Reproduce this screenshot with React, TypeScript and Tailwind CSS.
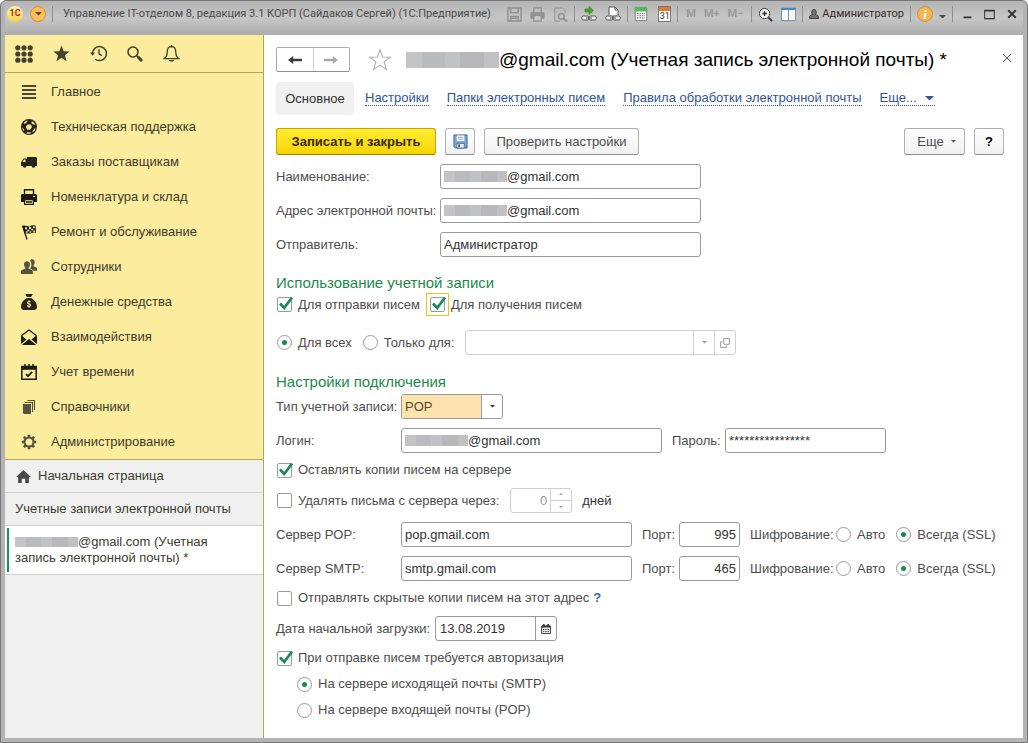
import React from "react";
import { FaSackDollar } from "react-icons/fa6";

interface IconProps {
  children: React.ReactNode;
  className?: string;
}

const Icon: React.FC<IconProps> = ({ children, className = "size-4" }) => (
  <svg
    viewBox="0 0 16 16"
    fill="none"
    stroke="currentColor"
    aria-hidden="true"
    className={`shrink-0 ${className}`}
  >
    {children}
  </svg>
);

const menu = [
  {
    title: "Главное",
    icon: (
      <Icon className="size-4 text-[#4a4638]">
        <path d="M1 2h14M1 6h14M1 10h14M1 14h14" strokeWidth="2" />
      </Icon>
    ),
  },
  {
    title: "Техническая поддержка",
    icon: (
      <Icon className="size-4 text-[#26251c]">
        <circle cx="8" cy="8" r="8" fill="currentColor" stroke="none" />
        <g fill="#fbec9e" stroke="none">
          <path d="M6.4 5.4h3.4l1.3 2.7-1.9 2.7H6.3L4.8 8z" />
          <path d="M3 3.6l2.6-2 1.2.5-3 3.2zM10.8 2l3 2.6-.2 1.6-3.2-2zM1.4 8.2l1.8 2.6-.2 1.6L1.6 10zM14.6 8.5l-.5 2.7-2.6 2.4.3-2.2zM6 13.2l3.6.1.4 1-2 .5-2.6-.4z" />
        </g>
      </Icon>
    ),
  },
  {
    title: "Заказы поставщикам",
    icon: (
      <Icon className="size-4 text-[#26251c]">
        <path d="M6 3h9l1 1v8H0V8.500L2.500 4.500H6z" fill="currentColor" stroke="none" />
        <path d="M3 5.500h1.500V8H1.500z" fill="#fbec9e" stroke="none" />
        <circle cx="3.700" cy="12" r="1.800" fill="currentColor" stroke="none" />
        <circle cx="12.500" cy="12" r="1.800" fill="currentColor" stroke="none" />
      </Icon>
    ),
  },
  {
    title: "Номенклатура и склад",
    icon: (
      <Icon className="size-4 text-[#1b1b14]">
        <path d="M3.500 6V.7h9V6" strokeWidth="1.400" />
        <path d="M1 5h14l1 1v7h-3v-3H3v3H0V6z" fill="currentColor" stroke="none" />
        <path d="M3.600 10.500h8.800v4.800H3.600zM5 13h6" strokeWidth="1.300" />
        <path d="M12 7.500h2" stroke="#fbec9e" />
      </Icon>
    ),
  },
  {
    title: "Ремонт и обслуживание",
    icon: (
      <Icon className="size-4 text-[#1b1b14]">
        <path d="M1.500 1.500L6 15.500" strokeWidth="1.300" />
        <path
          d="M1.500 2.200c3-2 5 1 7.300 0 2-1 3.500-1.200 5.800-.8l.4 7.400c-2-.7-3.500-.4-5.500.6-2 .8-3.500-1-5.800.2z"
          fill="currentColor"
          stroke="none"
        />
        <path
          d="M4 3.300h2v2H4zM8 3h2v2H8zM12 2.300h1.800v2H12zM6.300 5.500h2v1.800h-2zM10.200 4.800h1.800v1.800h-1.800zM4.800 7.300h1.700v1.400H4.800zM8.500 7.300h1.700v1.500H8.500zM12.200 6.500h1.700v1.500h-1.700z"
          fill="#fbec9e"
          stroke="none"
        />
      </Icon>
    ),
  },
  {
    title: "Сотрудники",
    icon: (
      <Icon className="size-4 text-[#56523f]">
        <g fill="currentColor" stroke="none">
          <path d="M9 1.500c.5-.9 1.200-1.200 2-1.200 1.700 0 2.700 1.200 2.700 3 0 1.300-.5 2.300-1.200 2.900v1l2.800 1.300c.5.300.7.700.7 1.300v2h-3.800c-.3-1-1-1.500-3.200-2.400 1-1 1.500-2.200 1.400-4C10.300 3.500 9.900 2.300 9 1.500z" />
          <path d="M6 2.200c1.800 0 2.900 1.300 2.900 3.100 0 1.500-.6 2.600-1.300 3.200v1.100l3.200 1.300c.8.300 1 .8 1 1.500V15H0v-2.600c0-.7.300-1.200 1-1.500l3.300-1.300V8.500C3.600 7.900 3 6.800 3 5.300c0-1.800 1.200-3.100 3-3.100z" />
        </g>
      </Icon>
    ),
  },
  {
    title: "Денежные средства",
    icon: <FaSackDollar className="size-4 shrink-0 text-[#26251c]" aria-hidden="true" />,
  },
  {
    title: "Взаимодействия",
    icon: (
      <Icon className="size-4 text-[#1b1b14]">
        <path d="M.7 6.500L8 .9l7.300 5.600" strokeWidth="1.200" />
        <path d="M0 6l5.500 4.500L0 15zM16 6l-5.500 4.500L16 15zM.8 16L8 10l7.200 6z" fill="currentColor" stroke="none" />
      </Icon>
    ),
  },
  {
    title: "Учет времени",
    icon: (
      <Icon className="size-4 text-[#1b1b14]">
        <path d="M.8 2.500h14.400v12.700H.8z" strokeWidth="1.500" />
        <path d="M1 4.300h14" strokeWidth="3" />
        <path d="M4 0v3M8 0v3M12 0v3" strokeWidth="1.500" />
        <path d="M5 10l2 2.200 4.200-4.400" strokeWidth="1.800" />
      </Icon>
    ),
  },
  {
    title: "Справочники",
    icon: (
      <Icon className="size-4 text-[#56523f]">
        <path d="M2 5h8v10H3l-1-1z" fill="currentColor" stroke="none" />
        <path d="M4 3.500h7.500V13M6.500 1.500h7V11" strokeWidth="1.100" />
      </Icon>
    ),
  },
  {
    title: "Администрирование",
    icon: (
      <Icon className="size-4 text-[#56523f]">
        <circle cx="8" cy="8" r="4.500" strokeWidth="2" />
        <path
          d="M8 .8V3M8 13v2.200M.8 8H3M13 8h2.200M2.900 2.900l1.600 1.600M11.500 11.500l1.600 1.600M13.100 2.900l-1.600 1.600M4.500 11.500l-1.600 1.600"
          strokeWidth="2.600"
        />
      </Icon>
    ),
  },
];

const tabs = ["Настройки", "Папки электронных писем", "Правила обработки электронной почты"];

const Arrow: React.FC<{ className?: string }> = ({ className = "w-[5px]" }) => (
  <svg viewBox="0 0 6 3" fill="currentColor" aria-hidden="true" className={`shrink-0 ${className}`}>
    <path d="M0 0h6L3 3z" />
  </svg>
);

const Divider: React.FC = () => <span className="h-4 w-px bg-[#8f8f8f]" />;

// Pixelated strip that hides the private part of an address
const Mosaic: React.FC<{ className: string }> = ({ className }) => (
  <span className={`flex shrink-0 ${className}`} aria-hidden="true">
    <span className="flex-2 bg-[#c4c4c6]" />
    <span className="flex-3 bg-[#babbbe]" />
    <span className="flex-2 bg-[#c1c2c6]" />
    <span className="flex-3 bg-[#b8b8bb]" />
    <span className="flex-2 bg-[#c1c1c3]" />
  </span>
);

interface FieldProps {
  id: string;
  value: string;
  className: string;
  hidden?: boolean;
  type?: string;
  align?: string;
}

const Field: React.FC<FieldProps> = ({ id, value, className, hidden, type = "text", align = "" }) => (
  <div
    className={`flex h-[25px] items-center rounded-[3px] border border-[#9a9a9a] bg-white px-[3px] text-[#333] ${className}`}
  >
    {hidden && <Mosaic className="h-[11px] w-[63px]" />}
    <input
      id={id}
      type={type}
      defaultValue={value}
      className={`w-full min-w-0 bg-transparent outline-none ${align}`}
    />
  </div>
);

const Check: React.FC<{ label: string; checked?: boolean; focused?: boolean }> = ({
  label,
  checked,
  focused,
}) => (
  <label className="flex items-center gap-0.5">
    <span
      className={
        focused
          ? "grid size-[23px] place-items-center border border-[#e0c818]"
          : "grid size-[23px] place-items-center"
      }
    >
      <input
        type="checkbox"
        defaultChecked={checked}
        className="peer col-start-1 row-start-1 size-[15px] appearance-none rounded-[2px] border border-[#9a9a9a] bg-white"
      />
      <svg
        viewBox="0 0 17 17"
        aria-hidden="true"
        className="pointer-events-none invisible col-start-1 row-start-1 size-[17px] overflow-visible peer-checked:visible"
      >
        <path d="M4 7.500l4.200 4.500L16 1.500" fill="none" stroke="#168a52" strokeWidth="2.700" />
      </svg>
    </span>
    {label}
  </label>
);

const Radio: React.FC<{ label: string; name: string; checked?: boolean }> = ({
  label,
  name,
  checked,
}) => (
  <label className="flex items-center gap-[6px]">
    <span className="grid place-items-center">
      <input
        type="radio"
        name={name}
        defaultChecked={checked}
        className="peer col-start-1 row-start-1 size-[15px] appearance-none rounded-full border border-[#9a9a9a] bg-white"
      />
      <span className="pointer-events-none invisible col-start-1 row-start-1 size-[5px] rounded-full bg-[#168a52] peer-checked:visible" />
    </span>
    {label}
  </label>
);

const ServerRow: React.FC<{ id: string; title: string; host: string; port: string }> = ({
  id,
  title,
  host,
  port,
}) => (
  <div className="mt-[9px] flex items-center">
    <label htmlFor={id} className="w-[125px] shrink-0">
      {title}
    </label>
    <Field id={id} value={host} className="w-[231px]" />
    <label htmlFor={`${id}-port`} className="ml-[10px] w-[37px]">
      Порт:
    </label>
    <Field id={`${id}-port`} value={port} className="w-[61px]" align="text-right" />
    <span className="ml-[10px] w-[86px]">Шифрование:</span>
    <Radio name={`${id}-ssl`} label="Авто" />
    <span className="w-[11px]" />
    <Radio name={`${id}-ssl`} label="Всегда (SSL)" checked />
  </div>
);

const TitleBar: React.FC = () => (
  <header className="flex h-[34px] items-center bg-linear-to-b from-[#b4b4b4] via-[#c6c6c6] to-[#adadad] pr-[6px] pb-2 pl-[2px] font-[Roboto,sans-serif] text-[11px] text-[#4a4a4a]">
    <span className="flex size-4 items-center justify-center rounded-full bg-linear-to-b from-[#fff6b0] to-[#f8d040] text-[9px] font-bold text-[#c8201a]">
      1С
    </span>
    <button
      aria-label="Главное меню"
      className="ml-[7px] flex size-4 items-center justify-center rounded-full border border-[#d59438] bg-[#f9bd5e] text-[#6b4420]"
    >
      <Arrow className="w-[7px]" />
    </button>
    <span className="ml-[6px] h-4 w-px bg-[#8f8f8f]" />
    <h1 className="ml-[10px] whitespace-nowrap">
      Управление IT-отделом 8, редакция 3.1 КОРП (Сайдаков Сергей) (1С:Предприятие)
    </h1>

    <div className="ml-auto flex shrink-0 items-center gap-[6px]">
      <div className="flex items-center gap-2 text-[#909090]">
        <button aria-label="Сохранить">
          <Icon className="size-[15px]">
            <path d="M1 1h14v14H1zM4 1v5h8V1M4 15v-5h8v5M5 12h6" strokeWidth="1.500" />
          </Icon>
        </button>
        <button aria-label="Печать">
          <Icon className="size-[15px]">
            <path d="M4 6V1h8v5M4 9h8v6H4z" strokeWidth="1.300" />
            <path d="M1 6h14v6h-3V9H4v3H1z" fill="currentColor" />
          </Icon>
        </button>
        <button aria-label="Просмотр">
          <Icon className="size-[15px]">
            <path d="M7 15H2V1h8l3 3v3" />
            <circle cx="9" cy="10" r="3" strokeWidth="1.500" />
            <path d="M11.200 12.200L15 15.500" strokeWidth="2" />
          </Icon>
        </button>
      </div>
      <Divider />
      <div className="flex items-center gap-2">
        <button aria-label="Получить ссылку">
          <Icon>
            <rect x=".8" y="10" width="7" height="4" rx="1.500" stroke="#555" fill="#eee" />
            <rect x="8.200" y="10" width="7" height="4" rx="1.500" stroke="#555" fill="#eee" />
            <path d="M5 12h6" stroke="#555" />
            <path d="M4 3h4V.5L12.500 4.500 8 8.500V6H4z" fill="#43a52d" stroke="#2d7a1d" strokeWidth=".6" />
          </Icon>
        </button>
        <button aria-label="Перейти по ссылке">
          <Icon>
            <path d="M4 9V1h6l3 3v5" stroke="#555" fill="#fff" />
            <path d="M10 1v3h3" stroke="#555" />
            <rect x=".8" y="10" width="7" height="4" rx="1.500" stroke="#555" fill="#eee" />
            <rect x="8.200" y="10" width="7" height="4" rx="1.500" stroke="#555" fill="#eee" />
            <path d="M5 12h6" stroke="#555" />
          </Icon>
        </button>
      </div>
      <Divider />
      <div className="flex items-center gap-[10px]">
        <button aria-label="Калькулятор">
          <Icon className="h-4 w-[14px]">
            <path d="M1.500 .5h13v15h-13z" fill="#fff" stroke="#777" />
            <path d="M1 0h14v5H1z" fill="#4fb66a" stroke="none" />
            <path
              d="M3.500 7.500h9M3.500 10h9M3.500 12.500h9"
              stroke="#6b6b6b"
              strokeWidth="1.400"
              strokeDasharray="1.600 1.200"
            />
          </Icon>
        </button>
        <button
          aria-label="Календарь"
          className="flex h-4 w-[13px] flex-col items-center border border-[#777] bg-white text-[9px] leading-[10px] text-[#333]"
        >
          <span className="h-1 w-full shrink-0 bg-[#dd7a35]" />
          31
        </button>
      </div>
      <Divider />
      <div className="flex gap-2 px-0.5 font-bold text-[#9a9a9a]">
        <button>M</button>
        <button>M+</button>
        <button>M−</button>
      </div>
      <Divider />
      <div className="flex items-center gap-2">
        <button aria-label="Масштаб" className="text-[#333]">
          <Icon className="size-[15px]">
            <circle cx="7" cy="7" r="5.500" fill="#eee" />
            <path d="M4.500 7h5M7 4.500v5" strokeWidth="1.500" />
            <path d="M11 11l4 4" strokeWidth="2" />
          </Icon>
        </button>
        <button aria-label="Панели">
          <Icon className="size-[15px]">
            <path d="M.5 1.500h15v13H.5z" fill="#fff" stroke="#6c88a8" />
            <path d="M0 2h16" stroke="#3d8cd0" strokeWidth="2.500" />
            <path d="M8 3v12" stroke="#6c88a8" />
          </Icon>
        </button>
      </div>
      <Divider />
      <button className="flex items-center gap-[3px] text-[#3a2c2c]">
        <Icon className="size-[10px]">
          <path
            d="M8 1c3 0 3.500 2 3.500 4S10.500 8.500 10 9c3 0 5.500 1.500 5.500 6H.5C.500 10.500 3 9 6 9 5.500 8.500 4.500 7 4.500 5S5 1 8 1z"
            fill="#777"
            stroke="#333"
            strokeWidth="1.500"
          />
        </Icon>
        Администратор
      </button>
      <Divider />
      <button
        aria-label="Справка"
        className="flex size-4 items-center justify-center rounded-full border border-[#d59438] bg-[#f5b550] font-['Liberation_Serif',serif] text-[13px] leading-none font-bold text-white italic"
      >
        i
      </button>
      <button aria-label="Меню справки" className="self-end pb-1 text-[#444]">
        <Arrow className="w-[7px]" />
      </button>
      <Divider />
      <div className="flex items-center gap-3 pl-1 text-[#333]">
        <button aria-label="Свернуть">
          <Icon className="size-[9px]">
            <path d="M1 13h14" strokeWidth="3" />
          </Icon>
        </button>
        <button aria-label="Развернуть">
          <Icon className="size-[11px]">
            <path d="M1 2h14v12H1z" strokeWidth="1.500" />
            <path d="M1 2.500h14" strokeWidth="2" />
          </Icon>
        </button>
        <button aria-label="Закрыть окно">
          <Icon className="size-[10px]">
            <path d="M2 2l12 12M14 2L2 14" strokeWidth="3" />
          </Icon>
        </button>
      </div>
    </div>
  </header>
);

const Sidebar: React.FC = () => (
  <aside className="flex w-[259px] shrink-0 flex-col border-r border-[#b5a655] bg-[#f0f0f0] text-[#3f3b2d]">
    <div className="bg-[#fbec9e]">
      <div className="flex h-[38px] items-center gap-5 border-b border-[#b5a655] pl-[10px] text-[#45412f]">
        <button aria-label="Меню функций">
          <Icon className="size-[18px]">
            <g fill="currentColor" stroke="none">
              {[2.5, 8, 13.5].map((y) =>
                [2.5, 8, 13.5].map((x) => <circle key={`${x}-${y}`} cx={x} cy={y} r="2.300" />)
              )}
            </g>
          </Icon>
        </button>
        <button aria-label="Избранное">
          <Icon className="size-[17px]">
            <path
              d="M8 .5l2 5.400 5.700.2-4.500 3.500 1.600 5.600L8 12l-4.800 3.200 1.600-5.600L.3 6.100 6 5.900z"
              fill="currentColor"
              stroke="none"
            />
          </Icon>
        </button>
        <button aria-label="История">
          <Icon className="size-[17px]">
            <path d="M2.300 8A6.600 6.600 0 1 1 5 13.400" strokeWidth="1.400" />
            <path d="M0 7h4.800L2.300 10z" fill="currentColor" stroke="none" />
            <path d="M8.500 4v4.300l2.700 1.700" strokeWidth="1.300" />
          </Icon>
        </button>
        <button aria-label="Поиск">
          <Icon>
            <circle cx="6" cy="6" r="5" strokeWidth="1.600" />
            <path d="M9.500 9.500l2 2" strokeWidth="1.400" />
            <path d="M10.800 10.800l4.200 4.200" strokeWidth="3" />
          </Icon>
        </button>
        <button aria-label="Оповещения">
          <Icon className="size-[17px]">
            <path
              d="M8 1.500c-3 0-4 2-4 5 0 3.500-1 5-2.700 6.300h13.400C13 11.500 12 10 12 6.500c0-3-1-5-4-5z"
              strokeWidth="1.200"
            />
            <path d="M8 0v2" strokeWidth="1.600" />
            <path d="M5.500 14h5c-.5 2-4.500 2-5 0z" fill="currentColor" stroke="none" />
          </Icon>
        </button>
      </div>
      <nav className="border-b border-[#b5a655] pt-px">
        {menu.map((item) => (
          <a key={item.title} href="#" className="flex h-[35px] items-center gap-[14px] pl-4">
            {item.icon}
            {item.title}
          </a>
        ))}
      </nav>
    </div>
    <a href="#" className="flex h-[33px] items-center gap-[7px] border-b border-[#d0d0d0] pl-[11px]">
      <Icon className="size-[15px] text-[#4a4a4a]">
        <path d="M8 1l8 7.500h-2.300V15H9.800v-4.500H6.200V15H2.300V8.500H0z" fill="currentColor" stroke="none" />
      </Icon>
      Начальная страница
    </a>
    <a href="#" className="flex h-[33px] items-center border-b border-[#d0d0d0] pl-[10px]">
      Учетные записи электронной почты
    </a>
    <a href="#" className="flex h-[49px] border-b border-[#d0d0d0] bg-white py-[2px] pl-0.5">
      <span className="w-0.5 shrink-0 bg-[#14935b]" />
      <span className="ml-[6px] flex flex-col justify-center leading-4">
        <span className="flex items-center">
          <Mosaic className="h-[10px] w-[63px]" />
          @gmail.com (Учетная
        </span>
        запись электронной почты) *
      </span>
    </a>
  </aside>
);

const buttonStyle =
  "flex h-[27px] items-center justify-center rounded-[3px] border border-[#b0b0b0] border-b-[#8c8c8c] bg-linear-to-b from-white to-[#f1f1f1]";

const AccountForm: React.FC = () => (
  <main className="min-w-0 flex-1 bg-white pr-[19px] pb-[19px] pl-3 text-[#4d4d4d]">
    <div className="flex items-center pt-3">
      <div className="flex h-[25px] w-[74px] rounded-[2px] border border-[#ababab] border-b-[#8c8c8c]">
        <button aria-label="Назад" className="flex flex-1 items-center justify-center text-[#3c3c3c]">
          <Icon className="size-[14px]">
            <path d="M4 8h12" strokeWidth="3" />
            <path d="M0 8l6-4.500v9z" fill="currentColor" stroke="none" />
          </Icon>
        </button>
        <button
          aria-label="Вперед"
          className="flex flex-1 items-center justify-center border-l border-[#d0d0d0] text-[#a8a8a8]"
        >
          <Icon className="size-[14px]">
            <path d="M0 8h12" strokeWidth="3" />
            <path d="M16 8l-6-4.500v9z" fill="currentColor" stroke="none" />
          </Icon>
        </button>
      </div>
      <button aria-label="В избранное" className="ml-[18px] text-[#ababab]">
        <Icon className="size-6">
          <path
            d="M8 1.100l1.700 4.900 5.200.1-4.100 3.200 1.500 5L8 11.400l-4.300 2.900 1.500-5L1.100 6.100 6.300 6z"
            strokeWidth=".7"
          />
        </Icon>
      </button>
      <h2 className="ml-[14px] flex items-center text-[19px] leading-6 text-black">
        <Mosaic className="h-4 w-[93px]" />
        @gmail.com (Учетная запись электронной почты) *
      </h2>
      <button aria-label="Закрыть" className="-mr-2 mb-1 ml-auto text-[#555]">
        <Icon className="size-[10px]">
          <path d="M1.500 1.500l13 13M14.500 1.500l-13 13" strokeWidth="1.600" />
        </Icon>
      </button>
    </div>

    <nav className="mt-[10px] flex h-[33px] items-center gap-[18px] whitespace-nowrap text-[#2f5597]">
      <a
        href="#"
        className="-mr-[7px] flex h-[33px] w-[78px] items-center justify-center rounded-[4px] bg-[#f0f0f0] text-[#333]"
      >
        Основное
      </a>
      {tabs.map((tab) => (
        <a key={tab} href="#" className="border-b border-dotted border-[#2f5597] leading-[14px]">
          {tab}
        </a>
      ))}
      <a
        href="#"
        className="flex items-center gap-2 border-b border-dotted border-[#2f5597] pr-px leading-[14px]"
      >
        Еще...
        <Arrow className="w-[9px]" />
      </a>
    </nav>

    <div className="mt-[13px] flex gap-[9px]">
      <button className="flex h-[27px] w-40 items-center justify-center rounded-[3px] border border-[#c5a500] border-b-[#988000] bg-linear-to-b from-[#ffec2e] to-[#f8d500] font-bold text-[#3a2a00]">
        Записать и закрыть
      </button>
      <button aria-label="Записать" className={`${buttonStyle} w-[30px]`}>
        <Icon className="size-[15px]">
          <path d="M1 1h14v14H2.500L1 13.500z" fill="#7ea6d3" stroke="#42658f" />
          <path d="M4 1.500h8v6H4z" fill="#fff" stroke="none" />
          <path d="M5 3.500h6M5 5.500h6" stroke="#8ba3bd" />
          <path d="M4 10h8v5H4z" fill="#e8eef5" stroke="#42658f" strokeWidth=".8" />
          <path d="M5.500 11h2v3h-2z" fill="#42658f" stroke="none" />
        </Icon>
      </button>
      <button className={`${buttonStyle} w-[155px]`}>Проверить настройки</button>
      <button className={`${buttonStyle} ml-auto w-[61px] gap-[7px] pl-1`}>
        Еще
        <Arrow />
      </button>
      <button className={`${buttonStyle} w-[30px] font-bold text-black`}>?</button>
    </div>

    <form>
      <div className="mt-[9px] flex items-center">
        <label htmlFor="name" className="w-[164px] shrink-0">
          Наименование:
        </label>
        <Field id="name" value="@gmail.com" hidden className="w-[261px]" />
      </div>
      <div className="mt-[9px] flex items-center">
        <label htmlFor="address" className="w-[164px] shrink-0 whitespace-nowrap">
          Адрес электронной почты:
        </label>
        <Field id="address" value="@gmail.com" hidden className="w-[261px]" />
      </div>
      <div className="mt-[9px] flex items-center">
        <label htmlFor="sender" className="w-[164px] shrink-0">
          Отправитель:
        </label>
        <Field id="sender" value="Администратор" className="w-[261px]" />
      </div>

      <h3 className="mt-4 text-[15px] leading-5 text-[#1c8a4c]">Использование учетной записи</h3>
      <div className="-ml-[3px] flex h-[23px] items-center gap-[6px]">
        <Check label="Для отправки писем" checked />
        <Check label="Для получения писем" checked focused />
      </div>
      <div className="mt-[14px] flex items-center gap-[11px] pl-px">
        <Radio name="owner" label="Для всех" checked />
        <Radio name="owner" label="Только для:" />
        <div className="flex h-[25px] w-[271px] rounded-[3px] border border-[#cfcfcf] text-[#999]">
          <input aria-label="Пользователь" disabled className="min-w-0 flex-1" />
          <button
            type="button"
            aria-label="Выбрать"
            className="flex w-[21px] items-center justify-center border-l border-[#cfcfcf]"
          >
            <Arrow />
          </button>
          <button
            type="button"
            aria-label="Открыть"
            className="flex w-[21px] items-center justify-center border-l border-[#cfcfcf]"
          >
            <Icon className="size-[10px]">
              <path d="M6 1h9v9H6zM4 6H1v9h9v-3" strokeWidth="1.600" />
            </Icon>
          </button>
        </div>
      </div>

      <h3 className="mt-[17px] text-[15px] leading-5 text-[#1c8a4c]">Настройки подключения</h3>
      <div className="mt-0.5 flex items-center">
        <label htmlFor="kind" className="w-[125px] shrink-0 whitespace-nowrap">
          Тип учетной записи:
        </label>
        <div className="flex h-[25px] w-[102px] overflow-hidden rounded-[3px] border border-[#9a9a9a] text-[#333]">
          <select
            id="kind"
            defaultValue="POP"
            className="min-w-0 flex-1 appearance-none bg-[#fde4ae] pl-[3px] text-[#5a4a2a] outline-none"
          >
            <option>POP</option>
            <option>IMAP</option>
          </select>
          <span className="flex w-[21px] items-center justify-center border-l border-[#9a9a9a]">
            <Arrow />
          </span>
        </div>
      </div>
      <div className="mt-[9px] flex items-center">
        <label htmlFor="login" className="w-[125px] shrink-0">
          Логин:
        </label>
        <Field id="login" value="@gmail.com" hidden className="w-[261px]" />
        <label htmlFor="password" className="ml-[10px] w-[53px]">
          Пароль:
        </label>
        <Field id="password" value="****************" className="w-[161px]" />
      </div>
      <div className="mt-2 -ml-[3px] flex h-[18px] items-center">
        <Check label="Оставлять копии писем на сервере" checked />
      </div>
      <div className="mt-[9px] -ml-[3px] flex items-center">
        <Check label="Удалять письма с сервера через:" />
        <div className="ml-[11px] flex h-[25px] w-[62px] rounded-[3px] border border-[#cfcfcf] text-[#999]">
          <input
            aria-label="Количество дней"
            defaultValue="0"
            disabled
            className="min-w-0 flex-1 pr-[3px] text-right"
          />
          <span className="flex w-[21px] flex-col border-l border-[#cfcfcf]">
            <button
              type="button"
              aria-label="Больше"
              className="flex flex-1 rotate-180 items-center justify-center"
            >
              <Arrow className="w-1" />
            </button>
            <button
              type="button"
              aria-label="Меньше"
              className="flex flex-1 items-center justify-center border-t border-[#cfcfcf]"
            >
              <Arrow className="w-1" />
            </button>
          </span>
        </div>
        <span className="ml-[10px] text-[#333]">дней</span>
      </div>

      <ServerRow id="pop" title="Сервер POP:" host="pop.gmail.com" port="995" />
      <ServerRow id="smtp" title="Сервер SMTP:" host="smtp.gmail.com" port="465" />

      <div className="mt-2 -ml-[3px] flex h-[18px] items-center">
        <Check label="Отправлять скрытые копии писем на этот адрес" />
        <a href="#" className="ml-1 font-bold text-[#2b6cb0]">
          ?
        </a>
      </div>
      <div className="mt-[9px] flex items-center">
        <label htmlFor="date" className="w-[159px] shrink-0 whitespace-nowrap">
          Дата начальной загрузки:
        </label>
        <div className="flex h-[25px] w-[122px] rounded-[3px] border border-[#9a9a9a] text-[#333]">
          <input id="date" defaultValue="13.08.2019" className="min-w-0 flex-1 pl-1 outline-none" />
          <button
            type="button"
            aria-label="Выбрать дату"
            className="flex w-[21px] items-center justify-center border-l border-[#9a9a9a]"
          >
            <Icon className="size-[10px]">
              <path d="M1 3h14v12H1z" strokeWidth="1.600" />
              <path d="M1 4.500h14M4.500 0v4M11.500 0v4" strokeWidth="2.500" />
              <path d="M3.500 8.500h9M3.500 12h9" strokeWidth="1.800" strokeDasharray="2 1.500" />
            </Icon>
          </button>
        </div>
      </div>
      <div className="mt-2 -ml-[3px] flex h-[18px] items-center">
        <Check label="При отправке писем требуется авторизация" checked />
      </div>
      <div className="flex flex-col gap-2 pt-2 pl-[21px] leading-[18px]">
        <Radio name="auth" label="На сервере исходящей почты (SMTP)" checked />
        <Radio name="auth" label="На сервере входящей почты (POP)" />
      </div>
    </form>
  </main>
);

const App: React.FC = () => {
  return (
    <div className="flex min-h-screen flex-col overflow-hidden rounded-t-[6px] border border-[#777] bg-[#b4b4b4] px-1 pb-1 font-['Liberation_Sans',Arial,sans-serif] text-[13px]">
      <TitleBar />
      <div className="flex flex-1">
        <Sidebar />
        <AccountForm />
      </div>
    </div>
  );
};

export default App;
